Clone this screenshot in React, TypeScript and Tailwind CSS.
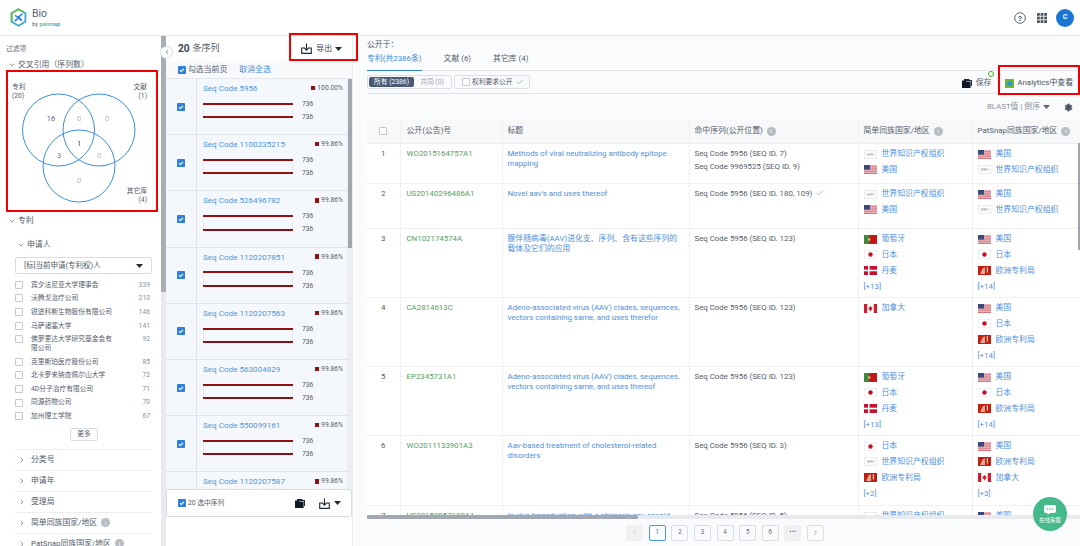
import React from "react";
import { ChevronDown, ChevronRight, ChevronLeft, Settings, Check } from "lucide-react";

type FlagKind = "us" | "wipo" | "pt" | "jp" | "dk" | "ca" | "ep";

function Flag({ k }: { k: FlagKind }) {
  const common = { width: 13, height: 9, viewBox: "0 0 13 9", className: "shrink-0 block" };
  if (k === "us")
    return (
      <svg {...common}>
        <rect width="13" height="9" fill="#e8b4b8" />
        <rect y="1.4" width="13" height="0.8" fill="#d4727c" />
        <rect y="3.6" width="13" height="0.8" fill="#d4727c" />
        <rect y="5.8" width="13" height="0.8" fill="#d4727c" />
        <rect y="8" width="13" height="1" fill="#d4727c" />
        <rect width="6" height="4.6" fill="#3b4a7a" />
      </svg>
    );
  if (k === "wipo")
    return (
      <svg {...common}>
        <rect x="0.25" y="0.25" width="12.5" height="8.5" fill="#fff" stroke="#d8d8d8" strokeWidth="0.5" />
        <text x="6.5" y="5.6" fontSize="2.8" textAnchor="middle" fill="#777" fontFamily="Liberation Sans, sans-serif">WIPO</text>
      </svg>
    );
  if (k === "pt")
    return (
      <svg {...common}>
        <rect width="13" height="9" fill="#c8161d" />
        <rect width="5.2" height="9" fill="#3f8a3c" />
        <circle cx="5.2" cy="4.5" r="1.3" fill="#e3c95a" />
      </svg>
    );
  if (k === "jp")
    return (
      <svg {...common}>
        <rect x="0.25" y="0.25" width="12.5" height="8.5" fill="#fff" stroke="#e2e2e2" strokeWidth="0.5" />
        <circle cx="6.5" cy="4.5" r="2.2" fill="#c01025" />
      </svg>
    );
  if (k === "dk")
    return (
      <svg {...common}>
        <rect width="13" height="9" fill="#c8102e" />
        <rect x="4" width="1.6" height="9" fill="#fff" />
        <rect y="3.7" width="13" height="1.6" fill="#fff" />
      </svg>
    );
  if (k === "ca")
    return (
      <svg {...common}>
        <rect width="13" height="9" fill="#fff" />
        <rect width="3.2" height="9" fill="#d01c2e" />
        <rect x="9.8" width="3.2" height="9" fill="#d01c2e" />
        <path d="M6.5 1.8 7.3 3.2 8.4 2.9 8 4.6 8.8 4.9 7 6.3 6.8 7.4H6.2L6 6.3 4.2 4.9 5 4.6 4.6 2.9 5.7 3.2Z" fill="#d01c2e" />
      </svg>
    );
  return (
    <svg {...common}>
      <rect width="13" height="9" fill="#c4200f" />
      <path d="M2.2 8 4.6 2.5 7 1.2 7 8Z" fill="#e9a79a" />
      <path d="M8.8 1.2 10 1.2 10 6.5 8.8 6.5Z" fill="#f2d6cc" />
    </svg>
  );
}

function Info() {
  return (
    <span className="inline-flex w-[9px] h-[9px] rounded-full bg-[#b8bcc4] text-white text-[6px] leading-none items-center justify-center ml-[4px] shrink-0">i</span>
  );
}

function Caret({ dark = true }: { dark?: boolean }) {
  return (
    <svg width="7" height="4" viewBox="0 0 7 4" className="block shrink-0">
      <path d="M0 0H7L3.5 4Z" fill={dark ? "#1f2937" : "#5f6773"} />
    </svg>
  );
}

function DownloadIcon() {
  return (
    <svg width="11" height="11" viewBox="0 0 11 11" className="block shrink-0" fill="none" stroke="#1f2937" strokeWidth="1.1">
      <path d="M5.5 0.5V7M3 4.6 5.5 7.2 8 4.6" />
      <path d="M3 5H0.7V10.4H10.3V5H8" />
    </svg>
  );
}

function FolderIcon() {
  return (
    <svg width="10" height="9" viewBox="0 0 10 9" className="block shrink-0">
      <path d="M2 0H7L8 1H10V7H9V2H2Z" fill="#1f2937" />
      <path d="M0 1.6H3.5L4.4 2.6H8.6V9H0Z" fill="#111827" />
    </svg>
  );
}

function BlueCheck({ size = 8 }: { size?: number }) {
  return (
    <svg width={size} height={size} viewBox="0 0 8 8" className="block shrink-0">
      <rect width="8" height="8" rx="0.8" fill="#2f80dd" />
      <path d="M1.9 4.3 3.3 5.5 6.1 2.8" fill="none" stroke="#fff" strokeWidth="1.1" />
    </svg>
  );
}

function Box({ className = "" }: { className?: string }) {
  return <span className={"block w-[8px] h-[8px] border border-[#c4c8cf] rounded-[1px] bg-white shrink-0 " + className} />;
}

const applicants: [string, string][] = [
  ["宾夕法尼亚大学理事会", "339"],
  ["沃腾戈治疗公司", "210"],
  ["锐进科斯生物股份有限公司", "146"],
  ["马萨诸塞大学", "141"],
  ["佛罗里达大学研究基金会有限公司", "92"],
  ["克里斯珀医疗股份公司", "85"],
  ["北卡罗来纳查佩尔山大学", "72"],
  ["4D分子治疗有限公司", "71"],
  ["同源药物公司", "70"],
  ["加州理工学院", "67"],
];

const seqs: [string, string][] = [
  ["Seq Code 5956", "100.00%"],
  ["Seq Code 1100235215", "99.86%"],
  ["Seq Code 526496782", "99.86%"],
  ["Seq Code 1120207851", "99.86%"],
  ["Seq Code 1120207563", "99.86%"],
  ["Seq Code 563004829", "99.86%"],
  ["Seq Code 550099161", "99.86%"],
  ["Seq Code 1120207587", "99.86%"],
];

type F = [FlagKind, string];
const US: F = ["us", "美国"];
const WI: F = ["wipo", "世界知识产权组织"];
const PT: F = ["pt", "葡萄牙"];
const JP: F = ["jp", "日本"];
const DK: F = ["dk", "丹麦"];
const EP: F = ["ep", "欧洲专利局"];
const CA: F = ["ca", "加拿大"];

type Row = {
  n: number;
  id: string;
  title: string;
  seq: React.ReactNode[];
  f1: F[];
  m1?: string;
  f2: F[];
  m2?: string;
  h: string;
};

const rows: Row[] = [
  { n: 1, id: "WO2015164757A1", title: "Methods of viral neutralizing antibody epitope mapping", seq: ["Seq Code 5956 (SEQ ID. 7)", "Seq Code 9969525 (SEQ ID. 9)"], f1: [WI, US], f2: [US, WI], h: "h-[40px]" },
  {
    n: 2, id: "US20140296486A1", title: "Novel aav's and uses thereof",
    seq: [<span key="a" className="inline-flex items-center gap-[4px]">Seq Code 5956 (SEQ ID. 180, 109)<Check size={8} color="#62b562" strokeWidth={2} /></span>],
    f1: [WI, US], f2: [US, WI], h: "h-[45px]",
  },
  { n: 3, id: "CN102174574A", title: "腺伴随病毒(AAV)进化支、序列、含有这些序列的载体及它们的应用", seq: ["Seq Code 5956 (SEQ ID. 123)"], f1: [PT, JP, DK], m1: "[+13]", f2: [US, JP, EP], m2: "[+14]", h: "h-[69px]" },
  { n: 4, id: "CA2814613C", title: "Adeno-associated virus (AAV) clades, sequences, vectors containing same, and uses therefor", seq: ["Seq Code 5956 (SEQ ID. 123)"], f1: [CA], f2: [US, JP, EP], m2: "[+14]", h: "h-[69px]" },
  { n: 5, id: "EP2345731A1", title: "Adeno-associated virus (AAV) clades, sequences, vectors containing same, and uses thereof", seq: ["Seq Code 5956 (SEQ ID. 123)"], f1: [PT, JP, DK], m1: "[+13]", f2: [US, JP, EP], m2: "[+14]", h: "h-[69px]" },
  { n: 6, id: "WO2011133901A3", title: "Aav-based treatment of cholesterol-related disorders", seq: ["Seq Code 5956 (SEQ ID. 3)"], f1: [JP, WI, EP], m1: "[+2]", f2: [US, EP, CA], m2: "[+3]", h: "h-[70px]" },
  { n: 7, id: "US20150057180A1", title: "In vivo transduction with a chimeric aav capsid", seq: ["Seq Code 5956 (SEQ ID. 5)"], f1: [WI], f2: [US], h: "h-[50px]" },
];

function FlagCell({ list, more }: { list: F[]; more?: string }) {
  return (
    <td className="align-top border-l border-[#eef0f2] pl-[5px] pt-[3px]">
      {list.map(([k, t], i) => (
        <div key={i} className="flex items-center h-[15.6px] gap-[5px] text-[#4f8fdc]">
          <Flag k={k} />
          <span className="whitespace-nowrap">{t}</span>
        </div>
      ))}
      {more && <div className="h-[17px] leading-[17px] text-[#4f8fdc] whitespace-nowrap">{more}</div>}
    </td>
  );
}

function Accordion({ label, info }: { label: string; info?: boolean }) {
  return (
    <div className="flex items-center h-[21px] ml-[15px] w-[137px] border-t border-[#eceef1] pl-[3px] text-[7.875px] text-[#555d6b] whitespace-nowrap">
      <ChevronRight size={8} className="mr-[5px] shrink-0" />
      {label}
      {info && <Info />}
    </div>
  );
}

export default function App() {
  return (
    <div className="w-[1080px] h-[546px] overflow-hidden flex flex-col bg-white text-[#555d6b] [font-family:'Roboto','Noto_Sans_CJK_SC',sans-serif]">
      {/* top bar */}
      <header className="h-[36px] shrink-0 flex items-center border-b border-[#e3e5e8] pl-[10px] pr-[6px]">
        <svg width="17" height="19" viewBox="0 0 17 19" className="block shrink-0 -mt-[1px]">
          <path d="M8.5 1.2 15.4 5.2V13.8L8.5 17.8 1.6 13.8V5.2Z" fill="none" stroke="#3da9c9" strokeWidth="1.8" />
          <path d="M1.6 13.8V5.2L8.5 1.2 13 3.8" fill="none" stroke="#6cc04a" strokeWidth="1.8" />
          <path d="M4.5 12.8C7.5 12.5 9 7 12.5 6M5 7.5C7.5 8 9.5 11 12 12.5" fill="none" stroke="#2f80dd" strokeWidth="1.7" />
        </svg>
        <div className="ml-[5px] flex flex-col -mt-[1px]">
          <span className="text-[10.5px] leading-[13px] text-[#5a6270]">Bio</span>
          <span className="text-[5.8px] leading-[7px] mt-[1px] text-[#5a6270] whitespace-nowrap">by <span className="font-semibold text-[#66bb8a]">pats</span><span className="font-semibold text-[#4a9fd8]">nap</span></span>
        </div>
        <div className="ml-auto flex items-center">
          <svg width="12" height="12" viewBox="0 0 12 12" className="block">
            <circle cx="6" cy="6" r="5.3" fill="none" stroke="#4b5563" strokeWidth="0.9" />
            <text x="6" y="8.7" fontSize="8" textAnchor="middle" fill="#4b5563" fontFamily="Liberation Sans, sans-serif" fontWeight="700">?</text>
          </svg>
          <svg width="10" height="10" viewBox="0 0 10 10" className="block ml-[11px]" fill="#4b5563">
            {[0, 3.6, 7.2].flatMap((x) => [0, 3.6, 7.2].map((y) => <rect key={x + "-" + y} x={x} y={y} width="2.8" height="2.8" />))}
          </svg>
          <div className="ml-[9px] w-[18px] h-[18px] rounded-full bg-[#1976d2] text-white text-[7px] font-semibold flex items-center justify-center">C</div>
        </div>
      </header>

      <div className="flex-1 flex min-h-0">
        {/* sidebar */}
        <aside className="w-[161px] shrink-0 pt-[8px] overflow-hidden">
          <div className="pl-[6px] h-[10px] leading-[10px] text-[6.75px] text-[#6b7280]">过滤项</div>
          <div className="mt-[6px] h-[10px] flex items-center pl-[8px] text-[7.875px] whitespace-nowrap">
            <ChevronDown size={8} className="mr-[2px]" />交叉引用（序列数）
          </div>
          <div className="ml-[6px] w-[152px] h-[142px] border-2 border-[#f00000]">
            <svg viewBox="8 72 148 138" className="block w-full h-full" fontFamily="Roboto, Noto Sans CJK SC, sans-serif">
              <g fill="none" stroke="#3a8fdc" strokeWidth="1">
                <circle cx="58.5" cy="130" r="36" />
                <circle cx="99" cy="130" r="36" />
                <circle cx="79" cy="166" r="36" />
              </g>
              <g fontSize="7.5" textAnchor="middle" fill="#b4b8bf">
                <text x="51" y="121" fill="#555d6b">16</text>
                <text x="79" y="121">0</text>
                <text x="107" y="121">0</text>
                <text x="79" y="146" fill="#444b57">1</text>
                <text x="59" y="157.5" fill="#777">3</text>
                <text x="99" y="157.5">0</text>
                <text x="79" y="183">0</text>
              </g>
              <g fontSize="6.75" fill="#555d6b">
                <text x="12" y="89">专利</text>
                <text x="12" y="97.5">(20)</text>
                <text x="147" y="89" textAnchor="end">文献</text>
                <text x="147" y="97.5" textAnchor="end">(1)</text>
                <text x="147" y="193" textAnchor="end">其它库</text>
                <text x="147" y="202" textAnchor="end">(4)</text>
              </g>
            </svg>
          </div>
          <div className="mt-[4px] h-[10px] flex items-center pl-[8px] text-[7.875px]">
            <ChevronDown size={8} className="mr-[2px]" />专利
          </div>
          <div className="mt-[14px] h-[10px] flex items-center pl-[17px] text-[7.875px]">
            <ChevronDown size={8} className="mr-[2px]" />申请人
          </div>
          <div className="mt-[7px] ml-[15px] w-[137px] h-[17px] border border-[#d9dce1] rounded-[2px] flex items-center justify-between pl-[8px] pr-[8px] text-[7.5px]">
            [标]当前申请(专利权)人
            <Caret />
          </div>
          <div className="mt-[4px] ml-[15px] w-[135px]">
            {applicants.map(([name, c], i) => {
              const two = name.length > 13;
              return (
                <div key={i} className={two ? "flex items-start pt-[2.3px] h-[22.6px]" : "flex items-center h-[13.6px]"}>
                  <Box />
                  <span className={"ml-[8px] w-[86px] text-[6.75px] " + (two ? "leading-[9px]" : "whitespace-nowrap")}>{name}</span>
                  <span className={"ml-auto text-[6.75px] text-[#8b929c] " + (two ? "leading-[9px]" : "")}>{c}</span>
                </div>
              );
            })}
          </div>
          <div className="mt-[5px] ml-[70px] w-[28px] h-[13px] border border-[#d9dce1] rounded-[2px] flex items-center justify-center text-[6.75px]">更多</div>
          <div className="mt-[8px]">
            <Accordion label="分类号" />
            <Accordion label="申请年" />
            <Accordion label="受理局" />
            <Accordion label="简单同族国家/地区" info />
            <Accordion label="PatSnap同族国家/地区" info />
          </div>
        </aside>

        {/* sidebar scrollbar */}
        <div className="relative w-[5px] shrink-0 bg-[#e9eaed]">
          <div className="h-[256px] bg-[#a9adb5]" />
          <div className="absolute left-[-1px] top-[9.5px] w-[13px] h-[13px] rounded-full bg-white border border-[#d6dae0] flex items-center justify-center z-10">
            <ChevronLeft size={8} color="#3a8fdc" strokeWidth={2.5} />
          </div>
        </div>

        {/* sequence list */}
        <section className="relative w-[187px] shrink-0 flex flex-col bg-white min-h-0 border-r border-[#eceef1]">
          <div className="h-[25px] shrink-0 flex items-center pl-[12px] pr-[10px]">
            <span className="text-[10.125px] font-bold text-[#374151]">20</span>
            <span className="ml-[3px] text-[9px] text-[#555d6b]">条序列</span>
            <div className="ml-auto flex items-center">
              <DownloadIcon />
              <span className="ml-[4px] text-[7.875px] text-[#374151]">导出</span>
              <span className="ml-[3px]"><Caret /></span>
            </div>
          </div>
          <div className="h-[18px] shrink-0 flex items-center pl-[12px] bg-[#f8f9fb] border-b border-[#e4e7eb] text-[7.875px] whitespace-nowrap">
            <BlueCheck />
            <span className="ml-[2px]">勾选当前页</span>
            <span className="ml-[12px] text-[#3f8ad8]">取消全选</span>
          </div>
          <div className="relative h-[410px] shrink-0 overflow-hidden pr-[5px] bg-[#eceef1]">
            {seqs.map(([code, pct], i) => (
              <div key={i} className="flex h-[56.2px] bg-[#f4f8fc] border-b border-[#e2e6eb]">
                <div className="w-[31px] shrink-0 flex items-center justify-center border-r border-[#e2e6eb]">
                  <BlueCheck />
                </div>
                <div className="flex-1 pl-[6px] pr-[4px] pt-[3px]">
                  <div className="flex items-center justify-between h-[12px]">
                    <span className="text-[8.1px] text-[#4f96de] whitespace-nowrap">{code}</span>
                    <span className="flex items-center text-[6.75px] text-[#555d6b]">
                      <span className="w-[4.5px] h-[4.5px] bg-[#8f1010] mr-[2px]" />{pct}
                    </span>
                  </div>
                  {i < seqs.length - 1 && (
                    <div className="mt-[6px] flex items-center">
                      <div className="w-[90px] h-[15.5px] border-x border-[#e8eaee] flex flex-col justify-between">
                        <div className="h-[2px] bg-[#8f1010] -mx-px" />
                        <div className="h-[2px] bg-[#8f1010] -mx-px" />
                      </div>
                      <div className="ml-[9px] h-[21px] flex flex-col justify-between text-[6.75px] leading-[8px] text-[#555d6b]">
                        <span>736</span>
                        <span>736</span>
                      </div>
                    </div>
                  )}
                </div>
              </div>
            ))}
            <div className="absolute right-0 top-0 w-[4px] h-[169px] bg-[#a3a7af]" />
          </div>
          <div className="h-[28px] shrink-0 flex items-center pl-[11px] pr-[10px] bg-white border border-[#d8dbe1] rounded-[2px] text-[6.75px] whitespace-nowrap">
            <BlueCheck />
            <span className="ml-[2px]">20 选中序列</span>
            <span className="ml-auto"><FolderIcon /></span>
            <span className="ml-[14px]"><DownloadIcon /></span>
            <span className="ml-[4px]"><Caret /></span>
          </div>
          <div className="absolute left-[123px] -top-[3px] w-[69px] h-[28px] border-2 border-[#f00000] z-20" />
        </section>

        {/* results */}
        <main className="relative flex-1 min-w-0 flex flex-col bg-[#fafbfd] pl-[14px]">
          <div className="h-[35px] shrink-0 border-b border-[#e3e5e8]">
            <div className="pt-[3px] h-[16px] leading-[12px] text-[7.875px] text-[#555d6b]">公开于：</div>
            <div className="flex items-center gap-[22px] text-[7.875px] h-[19px] whitespace-nowrap">
              <span className="h-full leading-[14px] text-[#3f8ad8] border-b border-[#2f80dd]">专利(共2386条)</span>
              <span className="h-full leading-[14px]">文献 (6)</span>
              <span className="h-full leading-[14px]">其它库 (4)</span>
            </div>
          </div>
          <div className="h-[23px] shrink-0 flex items-center border-b border-[#e3e5e8] pr-[7px]">
            <div className="flex items-center h-[14px] border border-[#dcdfe4] rounded-[2px] p-[1px] text-[6.75px] whitespace-nowrap">
              <span className="h-full px-[3px] w-[45px] flex items-center justify-center bg-[#4a5a75] text-white rounded-[2px]">所有 (2386)</span>
              <span className="h-full w-[36px] flex items-center justify-center text-[#a2a7b0]">共同 (0)</span>
            </div>
            <div className="ml-[2px] flex items-center h-[14px] w-[76px] border border-[#dcdfe4] rounded-[2px] pl-[7px] text-[6.75px] whitespace-nowrap">
              <Box />
              <span className="ml-[2px]">权利要求公开</span>
              <Check size={8} color="#62b562" strokeWidth={2} className="ml-[3px]" />
            </div>
            <div className="ml-auto flex items-center pt-[2px]">
              <FolderIcon />
              <span className="ml-[4px] text-[7.875px] relative">保存
                <span className="absolute -right-[3px] -top-[6px] w-[6px] h-[6px] rounded-full border-[1.5px] border-[#46a81e] bg-white" />
              </span>
              <svg width="9" height="9" viewBox="0 0 9 9" className="block ml-[14px]">
                <rect width="9" height="9" fill="#76b82a" />
                <circle cx="4.5" cy="4.5" r="2.8" fill="#2e9bd6" />
              </svg>
              <span className="ml-[3px] text-[7.875px] text-[#4b5563] whitespace-nowrap">Analytics中查看</span>
            </div>
          </div>
          <div className="h-[26px] shrink-0 flex items-center justify-end pr-[7px] text-[7.875px] text-[#8d939d]">
            BLAST值 | 倒序
            <span className="ml-[3px] mr-[14px]"><Caret dark={false} /></span>
            <Settings size={9} color="#4b5563" fill="#4b5563" />
          </div>
          <div className="flex-1 min-h-0 overflow-hidden bg-white relative">
            <table className="table-fixed w-[713px] border-collapse text-[7.875px] text-[#555d6b]">
              <colgroup>
                <col className="w-[33px]" />
                <col className="w-[102px]" />
                <col className="w-[187px]" />
                <col className="w-[169px]" />
                <col className="w-[114px]" />
                <col className="w-[108px]" />
              </colgroup>
              <thead>
                <tr className="h-[23px] bg-[#f7f8f9]">
                  <th className="font-normal"><span className="flex justify-center"><Box /></span></th>
                  <th className="font-normal text-left border-l border-[#eef0f2] pl-[6px]">公开(公告)号</th>
                  <th className="font-normal text-left border-l border-[#eef0f2] pl-[5px]">标题</th>
                  <th className="font-normal text-left border-l border-[#eef0f2] pl-[5px]"><span className="flex items-center whitespace-nowrap">命中序列(公开位置)<Info /></span></th>
                  <th className="font-normal text-left border-l border-[#eef0f2] pl-[5px]"><span className="flex items-center whitespace-nowrap">简单同族国家/地区<Info /></span></th>
                  <th className="font-normal text-left border-l border-[#eef0f2] pl-[5px]"><span className="flex items-center whitespace-nowrap">PatSnap同族国家/地区<Info /></span></th>
                </tr>
              </thead>
              <tbody>
                {rows.map((r) => (
                  <tr key={r.n} className={r.h + " border-t border-[#eef0f2]"}>
                    <td className="align-top text-center pt-[5px] leading-[10px]">{r.n}</td>
                    <td className="align-top border-l border-[#eef0f2] pl-[6px] pt-[5px] leading-[10px] text-[#55a05f]">{r.id}</td>
                    <td className="align-top border-l border-[#eef0f2] pl-[5px] pr-[6px] pt-[5px] leading-[10px] text-[#4f8fdc]">{r.title}</td>
                    <td className="align-top border-l border-[#eef0f2] pl-[5px] pt-[3px] leading-[13.4px]">
                      {r.seq.map((s, i) => (
                        <div key={i} className="whitespace-nowrap">{s}</div>
                      ))}
                    </td>
                    <FlagCell list={r.f1} more={r.m1} />
                    <FlagCell list={r.f2} more={r.m2} />
                  </tr>
                ))}
              </tbody>
            </table>
            <div className="absolute right-0 top-[23px] w-[2px] h-[107px] bg-[#9ea2a9]" />
          </div>
          <div className="h-[4px] shrink-0 bg-[#e9eaed]">
            <div className="w-[271px] h-full bg-[#a3a7af]" />
          </div>
          <nav className="h-[27px] shrink-0 flex items-center justify-center pl-[3px] gap-[5.6px] text-[6.75px] text-[#6b7280]">
            <span className="w-[17px] h-[16px] rounded-[2px] bg-[#f0f1f3] flex items-center justify-center"><ChevronLeft size={7} color="#b5b9c0" /></span>
            <span className="w-[17px] h-[16px] rounded-[2px] border border-[#4f96de] text-[#3f8ad8] flex items-center justify-center">1</span>
            {["2", "3", "4", "5", "6"].map((p) => (
              <span key={p} className="w-[17px] h-[16px] rounded-[2px] border border-[#d9dce1] flex items-center justify-center">{p}</span>
            ))}
            <span className="w-[17px] h-[16px] rounded-[2px] bg-[#f0f1f3] flex items-center justify-center leading-none">•••</span>
            <span className="w-[17px] h-[16px] rounded-[2px] border border-[#d9dce1] flex items-center justify-center"><ChevronRight size={7} /></span>
          </nav>

          {/* highlight */}
          <div className="absolute left-[645px] top-[29px] w-[82px] h-[30px] border-2 border-[#f00000] z-20" />
          {/* chat */}
          <div className="absolute left-[680px] top-[461px] w-[34px] h-[34px] rounded-full bg-[#45b98a] flex flex-col items-center justify-center text-white z-20">
            <svg width="12" height="10" viewBox="0 0 12 10" className="block">
              <path d="M2 0H10A2 2 0 0 1 12 2V6A2 2 0 0 1 10 8H6L3.5 10V8H2A2 2 0 0 1 0 6V2A2 2 0 0 1 2 0Z" fill="#fff" />
              <circle cx="3.4" cy="4" r="0.8" fill="#45b98a" />
              <circle cx="6" cy="4" r="0.8" fill="#45b98a" />
              <circle cx="8.6" cy="4" r="0.8" fill="#45b98a" />
            </svg>
            <span className="text-[5.5px] leading-[8px] mt-[1px] whitespace-nowrap">在线客服</span>
          </div>
        </main>
      </div>
    </div>
  );
}
